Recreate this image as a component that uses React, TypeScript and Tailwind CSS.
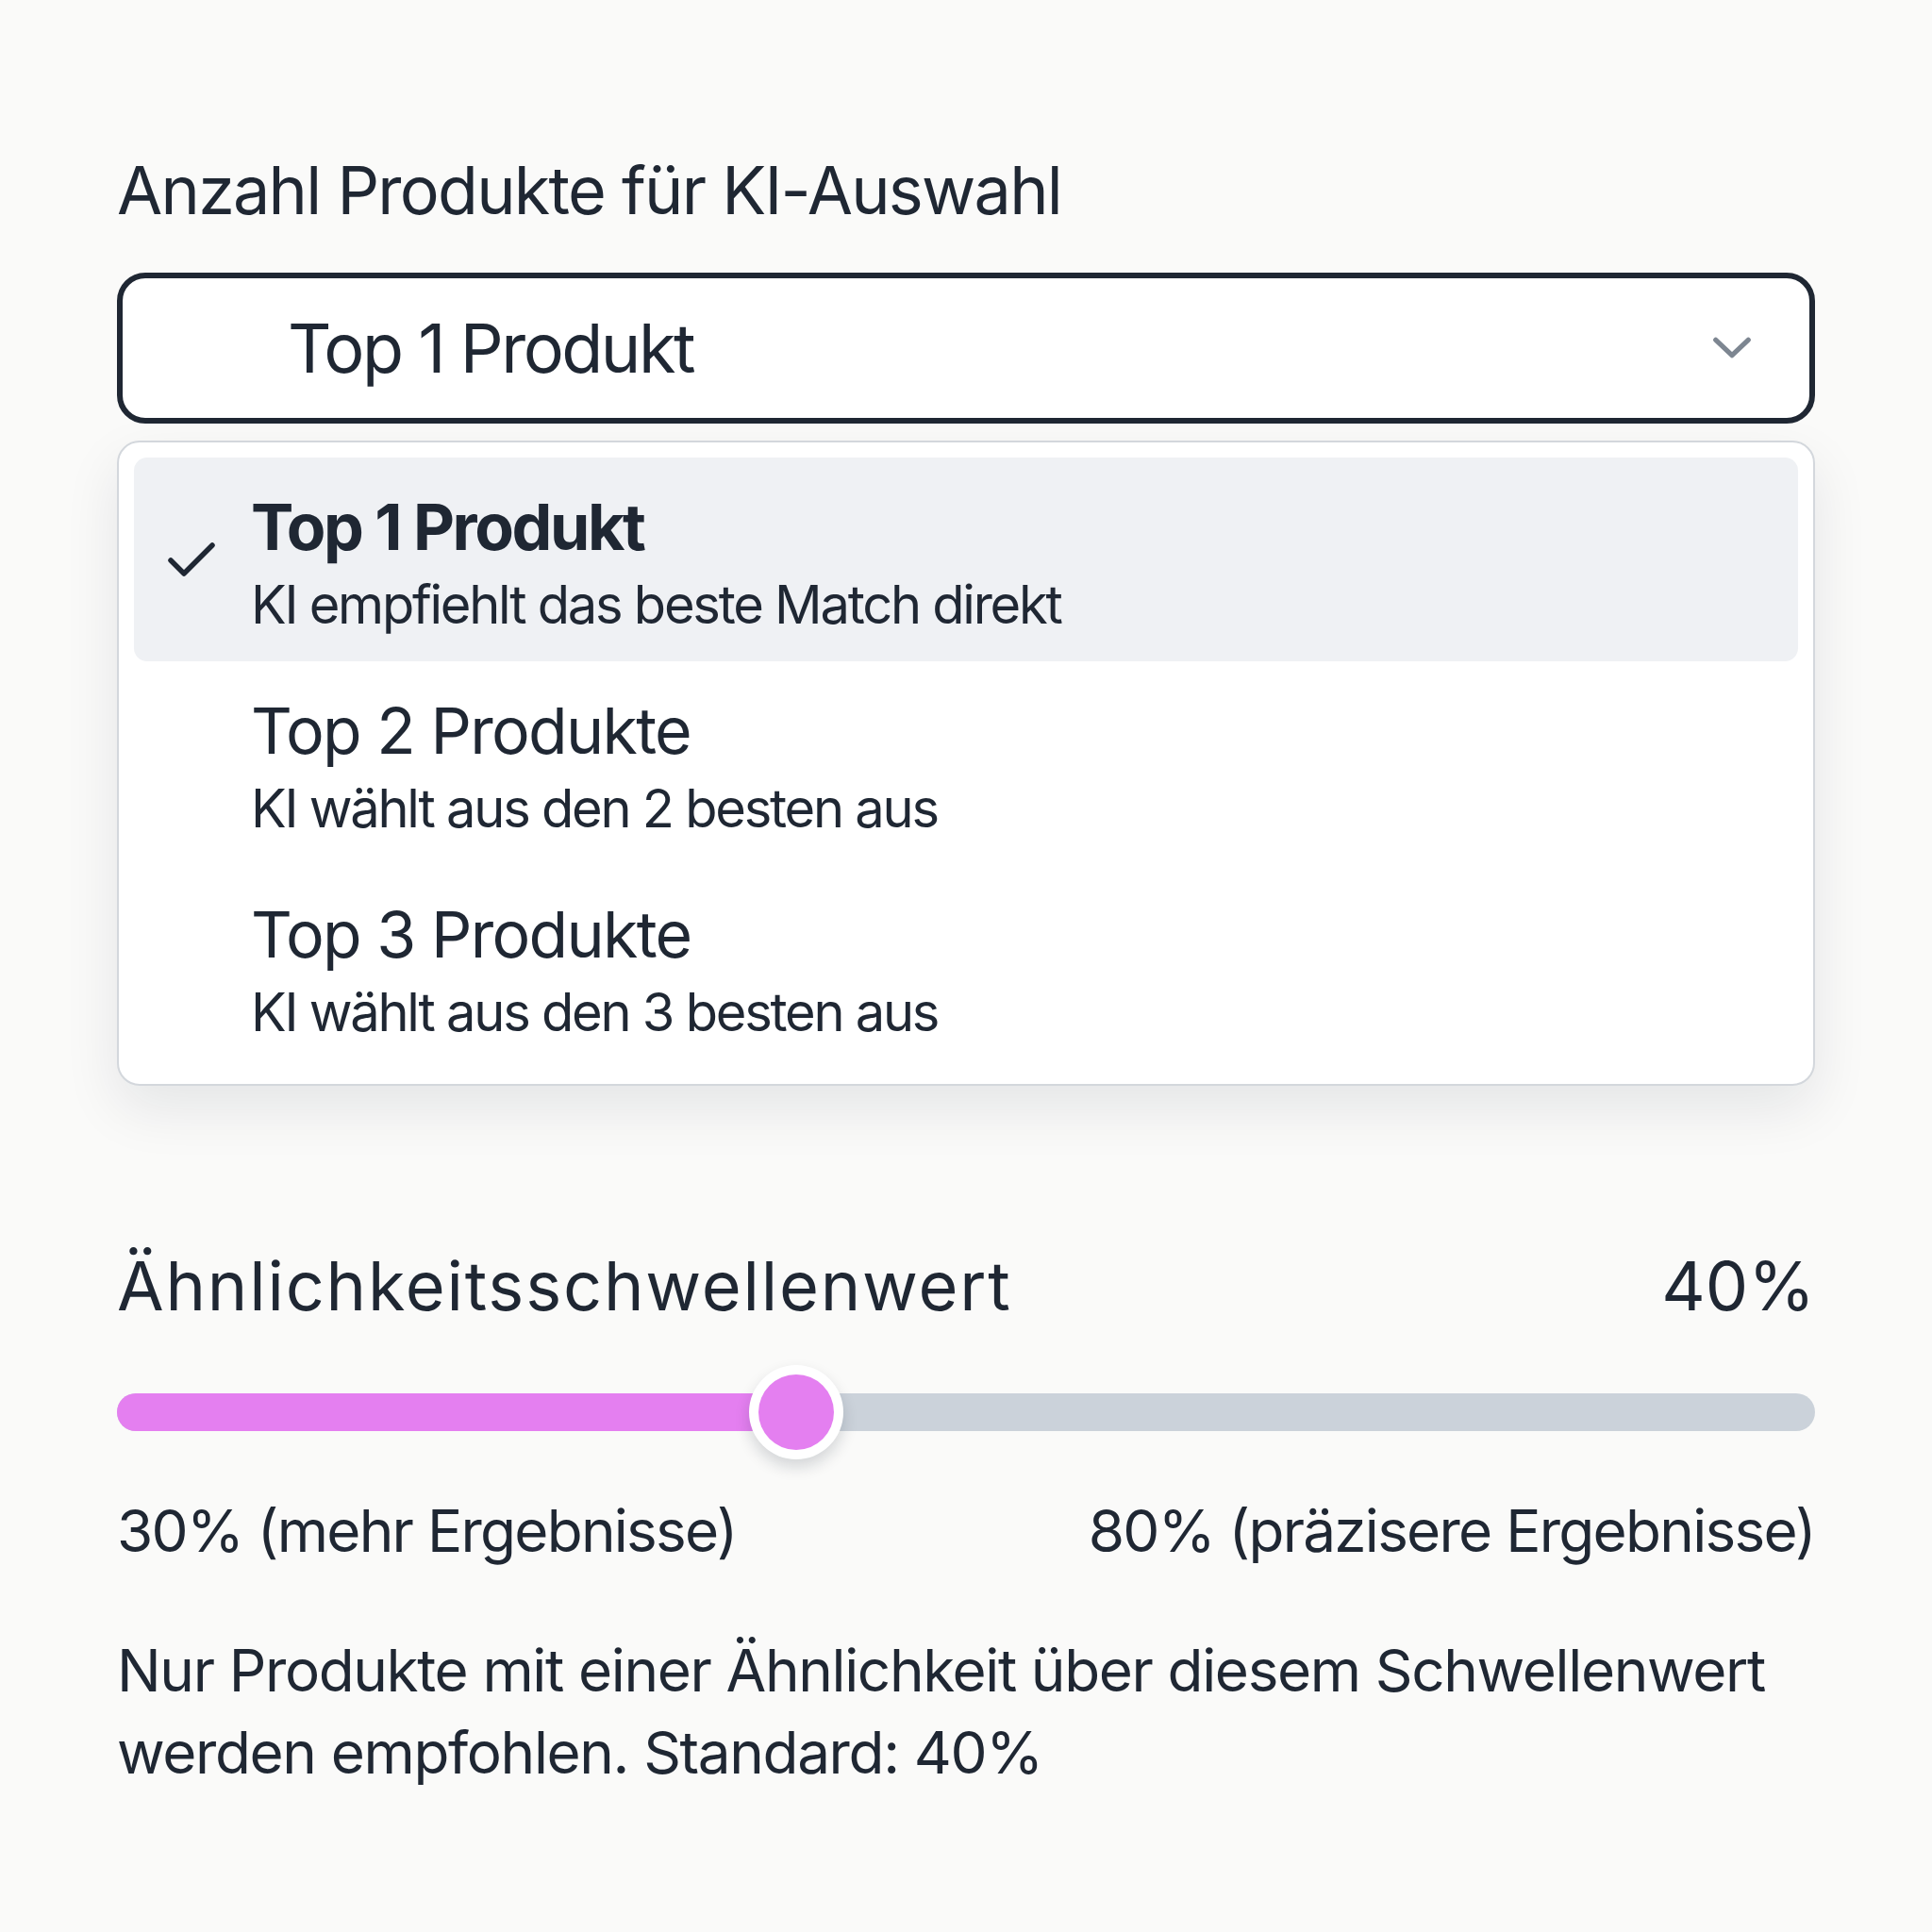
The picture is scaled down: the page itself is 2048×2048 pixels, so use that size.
import { useState } from 'react'

const OPTIONS = [
  { value: 1, title: 'Top 1 Produkt', hint: 'KI empfiehlt das beste Match direkt' },
  { value: 2, title: 'Top 2 Produkte', hint: 'KI wählt aus den 2 besten aus' },
  { value: 3, title: 'Top 3 Produkte', hint: 'KI wählt aus den 3 besten aus' },
]

function Chevron() {
  return (
    <svg viewBox="0 0 46 28" className="h-[28px] w-[44px]" aria-hidden>
      <path d="M5 5 L23 22 L41 5" fill="none" stroke="#7d8691" strokeWidth="5.5" strokeLinecap="round" strokeLinejoin="round" />
    </svg>
  )
}

function Check() {
  return (
    <svg viewBox="0 0 52 41" className="h-[41px] w-[52px] shrink-0" aria-hidden>
      <path d="M4 21 L18 35 L48 5" fill="none" stroke="#1f2733" strokeWidth="5.5" strokeLinecap="round" strokeLinejoin="round" />
    </svg>
  )
}

export default function App() {
  const [selected, setSelected] = useState(1)
  const [threshold] = useState(40)
  const current = OPTIONS.find((o) => o.value === selected) ?? OPTIONS[0]

  return (
    <div className="min-h-[2048px] w-[2048px] bg-[#fafaf9] px-[124px] pt-[160px] font-['Inter','Noto_Sans',sans-serif] text-[#1f2733]">
      {/* product count select, shown open */}
      <div className="text-[70px] leading-[84px] tracking-[-0.025em]">Anzahl Produkte für KI-Auswahl</div>

      <button
        type="button"
        className="mt-[45px] flex h-[160px] w-full items-center justify-between rounded-[30px] border-[6px] border-[#1f2733] bg-white pl-[175px] pr-[60px] text-left"
      >
        <span className="text-[72px] leading-none tracking-[-0.035em]">{current.title}</span>
        <Chevron />
      </button>

      <div className="mt-[18px] rounded-[24px] border-2 border-[#d3d7dc] bg-white p-[16px] shadow-[0_24px_60px_rgba(15,23,42,0.09)]">
        {OPTIONS.map((o) => {
          const active = o.value === selected
          return (
            <div
              key={o.value}
              onClick={() => setSelected(o.value)}
              className={`flex h-[216px] cursor-pointer items-center rounded-[14px] pl-[35px] ${active ? 'bg-[#eff1f4]' : ''}`}
            >
              <div className="w-[52px] shrink-0">{active && <Check />}</div>
              <div className="ml-[37px] mt-[6px] flex flex-col">
                <span className={`text-[68px] leading-[82px] ${active ? 'font-bold tracking-[-0.035em]' : 'tracking-[-0.025em]'}`}>
                  {o.title}
                </span>
                <span className="mt-[9px] text-[56px] leading-[67px] tracking-[-0.04em]">{o.hint}</span>
              </div>
            </div>
          )
        })}
      </div>

      {/* similarity threshold slider */}
      <div className="mt-[170px] flex items-baseline justify-between text-[72px] leading-[84px]">
        <span className="tracking-[0.025em]">Ähnlichkeitsschwellenwert</span>
        <span>{threshold}%</span>
      </div>

      <div className="relative mt-[72px] h-[40px] rounded-full bg-[#cbd2da]">
        <div className="absolute inset-y-0 left-0 rounded-full bg-[#e47ff0]" style={{ width: `${threshold}%` }} />
        <div
          className="absolute top-1/2 h-[100px] w-[100px] -translate-x-1/2 -translate-y-1/2 rounded-full bg-white p-[10px] shadow-[0_8px_16px_rgba(15,23,42,0.16)]"
          style={{ left: `${threshold}%` }}
        >
          <div className="h-full w-full rounded-full bg-[#e47ff0]" />
        </div>
      </div>

      <div className="mt-[69px] flex justify-between text-[62px] leading-[74px] tracking-[-0.028em]">
        <span>30% (mehr Ergebnisse)</span>
        <span>80% (präzisere Ergebnisse)</span>
      </div>

      <p className="mt-[67px] text-[62px] leading-[87px] tracking-[-0.022em]">
        Nur Produkte mit einer Ähnlichkeit über diesem Schwellenwert werden empfohlen. Standard: 40%
      </p>
    </div>
  )
}
